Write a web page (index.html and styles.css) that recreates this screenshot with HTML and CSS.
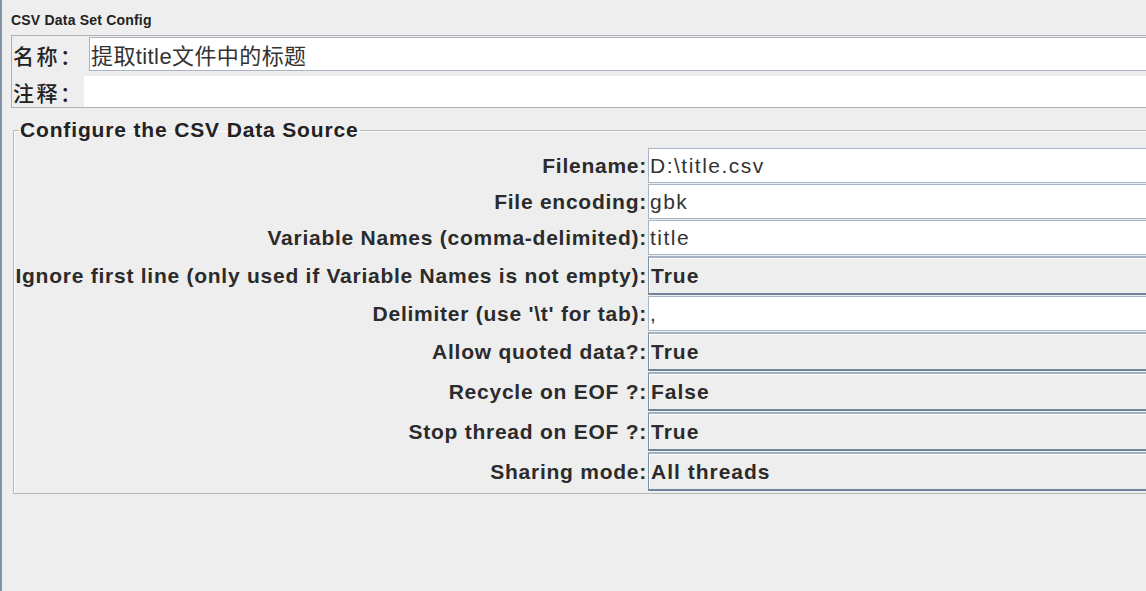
FILE: index.html
```html
<!DOCTYPE html>
<html>
<head>
<meta charset="utf-8">
<link rel="stylesheet" href="styles.css">
</head>
<body>
<div class="app">
  <div class="title">CSV Data Set Config</div>
  <div class="namebox">
    <div class="nrow first">
      <span class="nlabel">名称：</span>
      <div class="ninput">提取title文件中的标题</div>
    </div>
    <div class="nrow second">
      <span class="nlabel short">注释：</span>
      <div class="carea"></div>
    </div>
  </div>
  <fieldset class="group">
    <legend class="legend">Configure the CSV Data Source</legend>
    <div class="grid">
      <label class="lbl">Filename:</label><div class="tf">D:\title.csv</div>
      <label class="lbl">File encoding:</label><div class="tf">gbk</div>
      <label class="lbl">Variable Names (comma-delimited):</label><div class="tf">title</div>
      <label class="lbl">Ignore first line (only used if Variable Names is not empty):</label><div class="cb">True</div>
      <label class="lbl">Delimiter (use '\t' for tab):</label><div class="tf">,</div>
      <label class="lbl">Allow quoted data?:</label><div class="cb">True</div>
      <label class="lbl">Recycle on EOF ?:</label><div class="cb">False</div>
      <label class="lbl">Stop thread on EOF ?:</label><div class="cb">True</div>
      <label class="lbl">Sharing mode:</label><div class="cb">All threads</div>
    </div>
  </fieldset>
</div>
</body>
</html>
```
FILE: styles.css
```css
html, body {
  margin: 0;
  padding: 0;
  background: #eeeeee;
  overflow: hidden;
}
body {
  width: 1146px;
  height: 591px;
  font-family: "Liberation Sans", Arial, "Noto Sans CJK SC", sans-serif;
  color: #333333;
}
.app {
  box-sizing: border-box;
  height: 591px;
  border-left: 2px solid #8595a8;
  padding-left: 9px;
  display: flex;
  flex-direction: column;
  width: 1300px;
}
.title {
  font-weight: bold;
  font-size: 14px;
  letter-spacing: 0.2px;
  height: 35px;
  line-height: 16px;
  padding-top: 12px;
  box-sizing: border-box;
  color: #222;
}
.namebox {
  border: 1px solid #b0b0b0;
  height: 73px;
  box-sizing: border-box;
  display: flex;
  flex-direction: column;
}
.nrow {
  display: flex;
  align-items: stretch;
}
.nrow.first {
  height: 36px;
  padding-top: 1px;
  box-sizing: border-box;
}
.nrow.second {
  height: 35px;
  padding-top: 4px;
  box-sizing: border-box;
}
.nlabel {
  font-family: "Noto Sans CJK SC", sans-serif;
  font-size: 21px;
  font-weight: 500;
  letter-spacing: 2.5px;
  width: 76px;
  padding-left: 1px;
  display: flex;
  align-items: center;
  color: #222;
}
.nlabel.short {
  width: 71px;
}
.ninput {
  flex: 1;
  height: 34px;
  box-sizing: border-box;
  background: #fff;
  border: 1px solid #a8b4c2;
  font-family: "Liberation Sans", "Noto Sans CJK SC", sans-serif;
  font-size: 22px;
  letter-spacing: 0.4px;
  padding-left: 1px;
  display: flex;
  align-items: center;
  color: #333;
}
.carea {
  flex: 1;
  background: #fff;
}
.group {
  margin: 10px 0 0 2px;
  padding: 6px 0 1px 0;
  border: 1px solid #b8b8b8;
  box-shadow: inset 1px 1px 0 #fff;
  width: 1400px;
  box-sizing: border-box;
  min-width: 0;
}
.legend {
  font-weight: bold;
  font-size: 21px;
  letter-spacing: 0.85px;
  line-height: 24px;
  padding: 0 1px;
  margin-left: 5px;
  color: #222;
}
.grid {
  display: grid;
  grid-template-columns: 633px 1fr;
  column-gap: 1px;
}
.lbl {
  font-weight: bold;
  font-size: 21px;
  letter-spacing: 0.75px;
  text-align: right;
  display: flex;
  align-items: center;
  justify-content: flex-end;
  color: #2b2b2b;
  white-space: nowrap;
}
.tf {
  height: 35px;
  margin-bottom: 1px;
  box-sizing: border-box;
  background: #fff;
  border: 1px solid #a8b6c4;
  font-size: 21px;
  letter-spacing: 1.5px;
  padding-left: 1px;
  display: flex;
  align-items: center;
  color: #333;
}
.cb {
  height: 39px;
  margin-bottom: 1px;
  box-sizing: border-box;
  background: #eeeeee;
  border: 1px solid #7d8fa3;
  border-top: 2px solid #a4b2c1;
  border-bottom: 2px solid #6f8399;
  box-shadow: inset 1px 1px 0 #ffffff;
  font-size: 21px;
  font-weight: bold;
  letter-spacing: 1px;
  padding-left: 2px;
  display: flex;
  align-items: center;
  color: #2b2b2b;
}
```
